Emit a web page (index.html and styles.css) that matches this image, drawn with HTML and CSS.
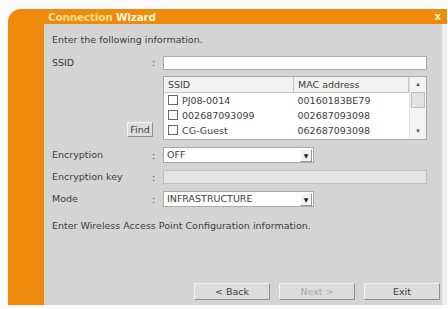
FILE: index.html
```html
<!DOCTYPE html>
<html lang="en">
<head>
    <meta charset="UTF-8">
    <meta name="viewport" content="width=device-width, initial-scale=1.0">
    <title>Connection Wizard</title>
    <link rel="stylesheet" href="styles.css">
</head>
<body>

    <div class="window">
        <div class="titlebar">
            <span class="title">Connection <b>Wizard</b></span>
            <span class="close">x</span>
        </div>
        <div class="frame">
            <div class="sidebar"></div>
            <div class="panel">
                <p class="intro">Enter the following information.</p>

                <div class="form">
                    <label>SSID</label>
                    <span class="colon">:</span>
                    <div class="field ssid-field"></div>

                    <div class="find-cell"><button class="btn find">Find</button></div>
                    <span></span>
                    <div class="ssid-list">
                        <table>
                            <tr>
                                <th class="col-ssid">SSID</th>
                                <th>MAC address</th>
                            </tr>
                            <tr>
                                <td><span class="check"></span>PJ08-0014</td>
                                <td>00160183BE79</td>
                            </tr>
                            <tr>
                                <td><span class="check"></span>002687093099</td>
                                <td>002687093098</td>
                            </tr>
                            <tr>
                                <td><span class="check"></span>CG-Guest</td>
                                <td>062687093098</td>
                            </tr>
                        </table>
                        <div class="scrollbar">
                            <span class="arrow">&#9652;</span>
                            <span class="thumb"></span>
                            <span class="track"></span>
                            <span class="arrow">&#9662;</span>
                        </div>
                    </div>

                    <label>Encryption</label>
                    <span class="colon">:</span>
                    <div class="select">OFF<span class="drop">&#9660;</span></div>

                    <label>Encryption key</label>
                    <span class="colon">:</span>
                    <div class="field disabled"></div>

                    <label>Mode</label>
                    <span class="colon">:</span>
                    <div class="select">INFRASTRUCTURE<span class="drop">&#9660;</span></div>
                </div>

                <p class="note">Enter Wireless Access Point Configuration information.</p>

                <div class="actions">
                    <button class="btn">&lt; Back</button>
                    <button class="btn" disabled>Next &gt;</button>
                    <button class="btn">Exit</button>
                </div>
            </div>
            <div class="edge"></div>
        </div>
    </div>

</body>
</html>
```

FILE: styles.css
```css
body {
    margin: 0;
    background: #fbfbfb;
    font-family: "DejaVu Sans", Verdana, sans-serif;
    font-size: 9.5px;
    color: #3c3c3c;
}
.window {
    width: 439px;
    height: 296px;
    margin: 9px 0 0 8px;
    background: #ef8a0c;
    border-top-left-radius: 13px;
    display: flex;
    flex-direction: column;
}
.titlebar {
    height: 15px;
    display: flex;
    align-items: center;
    justify-content: space-between;
    padding: 0 6px 0 40px;
}
.title {
    color: #ffdf8e;
    font-size: 10.5px;
    font-weight: bold;
    letter-spacing: -0.2px;
}
.title b {
    color: #fff6da;
}
.close {
    color: #fff2c0;
    font-weight: bold;
    font-size: 10px;
}
.frame {
    flex: 1;
    display: flex;
}
.sidebar {
    width: 36px;
}
.panel {
    width: 388px;
    padding: 10px 2px 5px 8px;
    background: #d4d4d4;
    display: flex;
    flex-direction: column;
}
.edge {
    flex: 1;
    background: #ececec;
}
.intro, .note {
    margin: 0;
    line-height: 12px;
}
.intro {
    margin-bottom: 10px;
}
.note {
    margin-top: 13px;
}
.form {
    display: grid;
    grid-template-columns: 100px 11px 264px;
    row-gap: 7px;
    align-items: center;
}
.form label {
    line-height: 12px;
}
.field {
    height: 12px;
    background: #fff;
    border: 1px solid #a9a9a9;
}
.ssid-field {
    margin-bottom: -1px;
}
.field.disabled {
    background: #e4e4e4;
    border-color: #bdbdbd;
}
.find-cell {
    align-self: end;
    display: flex;
    justify-content: flex-end;
    margin-right: -1px;
    margin-bottom: 3px;
}
.btn {
    font-family: inherit;
    font-size: 9.5px;
    color: #3c3c3c;
    background: #dcdcdc;
    border: 1px solid;
    border-color: #f4f4f4 #8e8e8e #8e8e8e #f4f4f4;
    padding: 0;
    height: 17px;
}
.btn:disabled {
    color: #a8a8a8;
}
.find {
    width: 26px;
    height: 15px;
}
.ssid-list {
    height: 62px;
    display: flex;
    background: #fff;
    border: 1px solid #a9a9a9;
}
.ssid-list table {
    flex: 1;
    border-collapse: collapse;
    align-self: flex-start;
}
.ssid-list th {
    height: 15px;
    padding: 0 0 0 4px;
    font-weight: normal;
    text-align: left;
    background: #f1f1f1;
    border-right: 1px solid #c4c4c4;
    border-bottom: 1px solid #c4c4c4;
}
.ssid-list .col-ssid {
    width: 125px;
}
.ssid-list td {
    height: 15px;
    padding: 0 0 0 4px;
    line-height: 15px;
}
.check {
    display: inline-block;
    width: 8px;
    height: 8px;
    border: 1px solid #666;
    margin-right: 4px;
    vertical-align: -1px;
}
.scrollbar {
    width: 16px;
    display: flex;
    flex-direction: column;
    align-items: center;
    background: #f3f3f3;
    border-left: 1px solid #e0e0e0;
}
.arrow {
    height: 15px;
    line-height: 15px;
    font-size: 7px;
    color: #555;
}
.thumb {
    width: 12px;
    height: 14px;
    background: #e2e2e2;
    border: 1px solid #c0c0c0;
}
.track {
    flex: 1;
}
.select {
    width: 146px;
    height: 14px;
    padding-left: 3px;
    line-height: 14px;
    background: #fff;
    border: 1px solid #a9a9a9;
    display: flex;
    justify-content: space-between;
    align-items: center;
}
.drop {
    width: 10px;
    height: 11px;
    margin-right: 1px;
    line-height: 11px;
    text-align: center;
    font-size: 6px;
    color: #222;
    background: #f2f2f2;
    border: 1px solid;
    border-color: #fff #999 #999 #fff;
}
.actions {
    margin-top: auto;
    display: flex;
    justify-content: flex-end;
    gap: 9px;
}
.actions .btn {
    width: 76px;
}
```
